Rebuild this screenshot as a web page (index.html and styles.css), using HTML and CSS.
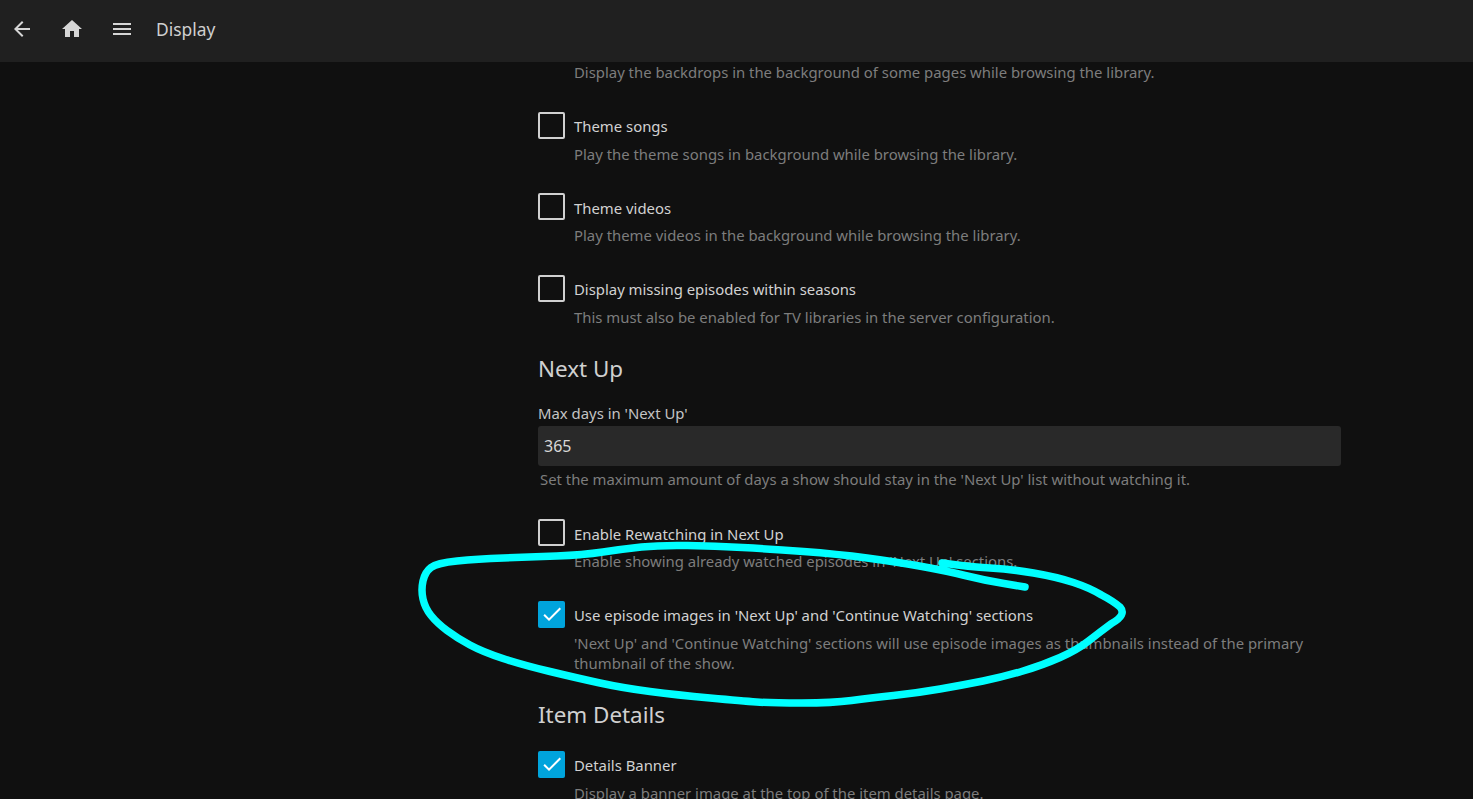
FILE: index.html
```html
<!DOCTYPE html>
<html lang="en">
<head>
  <meta charset="UTF-8" />
  <meta name="viewport" content="width=device-width, initial-scale=1.0"/>
  <title>Display</title>
  <link rel="stylesheet" href="styles.css">
</head>
<body>
  <header class="top-bar">
    <button class="icon-btn" aria-label="Back">
      <svg viewBox="0 0 24 24" width="24" height="24"><path d="M20 11H7.83l5.59-5.59L12 4l-8 8 8 8 1.41-1.41L7.83 13H20v-2z"/></svg>
    </button>
    <button class="icon-btn" aria-label="Home">
      <svg viewBox="0 0 24 24" width="24" height="24"><path d="M10 20v-6h4v6h5v-8h3L12 3 2 12h3v8z"/></svg>
    </button>
    <button class="icon-btn" aria-label="Menu">
      <svg viewBox="0 0 24 24" width="24" height="24"><path d="M3 18h18v-2H3v2zm0-5h18v-2H3v2zm0-7v2h18V6H3z"/></svg>
    </button>
    <h1 class="page-title">Display</h1>
  </header>

  <main class="settings">
    <p class="desc">Display the backdrops in the background of some pages while browsing the library.</p>

    <div class="check-row">
      <label class="check-line"><span class="box"></span><span class="check-text">Theme songs</span></label>
      <p class="desc">Play the theme songs in background while browsing the library.</p>
    </div>
    <div class="check-row">
      <label class="check-line"><span class="box"></span><span class="check-text">Theme videos</span></label>
      <p class="desc">Play theme videos in the background while browsing the library.</p>
    </div>
    <div class="check-row">
      <label class="check-line"><span class="box"></span><span class="check-text">Display missing episodes within seasons</span></label>
      <p class="desc">This must also be enabled for TV libraries in the server configuration.</p>
    </div>

    <h2 class="section-title">Next Up</h2>
    <div class="input-group">
      <label for="maxDays">Max days in 'Next Up'</label>
      <input id="maxDays" type="text" value="365">
      <p class="input-desc">Set the maximum amount of days a show should stay in the 'Next Up' list without watching it.</p>
    </div>

    <div class="check-row">
      <label class="check-line"><span class="box"></span><span class="check-text">Enable Rewatching in Next Up</span></label>
      <p class="desc">Enable showing already watched episodes in 'Next Up' sections.</p>
    </div>
    <div class="check-row">
      <label class="check-line"><span class="box checked"><svg viewBox="0 0 24 24" width="24" height="24"><path d="M9 16.17 4.83 12l-1.42 1.41L9 19 21 7l-1.41-1.41z"/></svg></span><span class="check-text">Use episode images in 'Next Up' and 'Continue Watching' sections</span></label>
      <p class="desc">'Next Up' and 'Continue Watching' sections will use episode images as thumbnails instead of the primary thumbnail of the show.</p>
    </div>

    <h2 class="section-title">Item Details</h2>
    <div class="check-row">
      <label class="check-line"><span class="box checked"><svg viewBox="0 0 24 24" width="24" height="24"><path d="M9 16.17 4.83 12l-1.42 1.41L9 19 21 7l-1.41-1.41z"/></svg></span><span class="check-text">Details Banner</span></label>
      <p class="desc">Display a banner image at the top of the item details page.</p>
    </div>
  </main>

  <!-- hand drawn circle on top of the screenshot -->
  <svg class="scribble" viewBox="0 0 1473 799" width="1473" height="799">
    <path d="M1025 587 L1004 583.5 Q983 580 965 575.5 Q947 571 922 566.5 Q897 562 867 558 Q837 554 803.5 551.5 Q770 549 742.5 547.5 Q715 546 687.5 545.5 Q660 545 641.5 547 Q623 549 603 552 Q583 555 556.5 556 Q530 557 503.5 558 Q477 559 457 561 Q437 563 431 567.5 Q425 572 423 581 Q421 590 423 599 Q425 608 431 615.5 Q437 623 447 630.5 Q457 638 470 645 Q483 652 503 658.5 Q523 665 550 671.5 Q577 678 600 683 Q623 688 650 691.5 Q677 695 710 698 Q743 701 756.5 702 Q770 703 801.5 703 Q833 703 851.5 700.5 Q870 698 893.5 695.5 Q917 693 940 689 Q963 685 983 681 Q1003 677 1023 671 Q1043 665 1060 657.5 Q1077 650 1088.5 641 Q1100 632 1111.5 623.5 Q1127 615 1120 607 Q1113 601 1101.5 595 Q1090 588 1073.5 582.5 Q1057 577 1033.5 573 Q1010 569 990 568 Q970 567 942 563"/>
  </svg>
</body>
</html>
```

FILE: styles.css
```css
* {
  box-sizing: border-box;
}
html, body {
  height: 100%;
}
body {
  margin: 0;
  overflow: hidden;
  background-color: #101010;
  color: #d8d8d8;
  font-family: "Noto Sans", sans-serif;
  font-size: 14.88px;
}
.top-bar {
  display: flex;
  align-items: center;
  height: 62px;
  padding: 0 0 4px 10px;
  background-color: #202020;
}
.icon-btn {
  display: flex;
  width: 24px;
  height: 24px;
  margin-right: 26px;
  padding: 0;
  border: none;
  background: none;
}
.icon-btn svg {
  fill: #d6d6d6;
}
.page-title {
  margin: 0 0 0 -4px;
  font-size: 17.4px;
  font-weight: 400;
  color: #cfcfcf;
}
.settings {
  width: 803px;
  margin-left: 538px;
}
.desc {
  margin: 0;
  padding-left: 36px;
  line-height: 20px;
  color: #7d7d7d;
}
.check-row {
  margin-top: 29.5px;
}
.check-line {
  display: flex;
  align-items: center;
  height: 27px;
  margin-bottom: 5px;
  color: #d2d2d2;
}
.check-text {
  padding-top: 2.5px;
}
.box {
  display: flex;
  align-items: center;
  justify-content: center;
  width: 27px;
  height: 27px;
  margin-right: 9px;
  border: 2px solid #d0d0d0;
  border-radius: 2px;
}
.box.checked {
  border: none;
  background-color: #00a4dc;
}
.box svg {
  fill: #fff;
}
.section-title {
  margin: 27px 0 0;
  font-size: 22.4px;
  line-height: 30px;
  font-weight: 400;
  color: #d0d0d0;
}
.section-title + .check-row {
  margin-top: 21px;
}
.input-group {
  margin-top: 19px;
  padding-bottom: 1px;
}
.input-group label {
  display: block;
  line-height: 20px;
  margin-bottom: 3px;
  color: #c4c4c4;
}
.input-group input {
  display: block;
  width: 100%;
  height: 40px;
  padding: 0 6px;
  border: none;
  border-radius: 3px;
  background-color: #292929;
  color: #d8d8d8;
  font-family: inherit;
  font-size: 16px;
}
.input-desc {
  margin: 3px 0 0;
  padding-left: 2px;
  line-height: 20px;
  color: #7d7d7d;
}
.scribble {
  position: absolute;
  top: 0;
  left: 0;
  pointer-events: none;
}
.scribble path {
  fill: none;
  stroke: #00ffff;
  stroke-width: 7.5;
  stroke-linejoin: round;
  stroke-linecap: round;
}
```
